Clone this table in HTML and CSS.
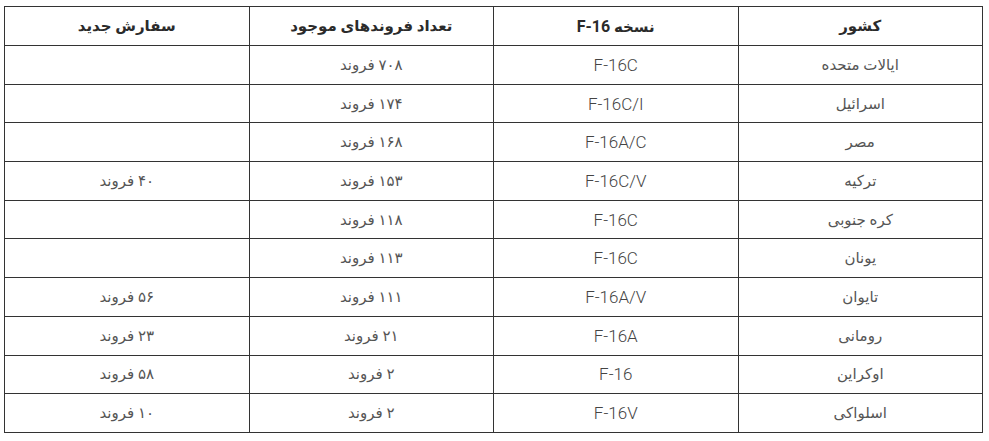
FILE: index.html
```html
<!DOCTYPE html>
<html lang="fa" dir="rtl">
<head>
<meta charset="utf-8">
<link rel="stylesheet" href="styles.css">
</head>
<body>
<table class="fleet">
<thead>
<tr><th>کشور</th><th>نسخه <span class="lat">F-16</span></th><th>تعداد فروندهای موجود</th><th>سفارش جدید</th></tr>
</thead>
<tbody>
<tr><td>ایالات متحده</td><td class="lat">F-16C</td><td>۷۰۸ فروند</td><td></td></tr>
<tr><td>اسرائیل</td><td class="lat">F-16C/I</td><td>۱۷۴ فروند</td><td></td></tr>
<tr><td>مصر</td><td class="lat">F-16A/C</td><td>۱۶۸ فروند</td><td></td></tr>
<tr><td>ترکیه</td><td class="lat">F-16C/V</td><td>۱۵۳ فروند</td><td>۴۰ فروند</td></tr>
<tr><td>کره جنوبی</td><td class="lat">F-16C</td><td>۱۱۸ فروند</td><td></td></tr>
<tr><td>یونان</td><td class="lat">F-16C</td><td>۱۱۳ فروند</td><td></td></tr>
<tr><td>تایوان</td><td class="lat">F-16A/V</td><td>۱۱۱ فروند</td><td>۵۶ فروند</td></tr>
<tr><td>رومانی</td><td class="lat">F-16A</td><td>۲۱ فروند</td><td>۲۳ فروند</td></tr>
<tr><td>اوکراین</td><td class="lat">F-16</td><td>۲ فروند</td><td>۵۸ فروند</td></tr>
<tr><td>اسلواکی</td><td class="lat">F-16V</td><td>۲ فروند</td><td>۱۰ فروند</td></tr>
</tbody>
</table>
</body>
</html>
```
FILE: styles.css
```css
html, body {
  margin: 0;
  padding: 0;
  background: #fff;
}
body {
  padding: 6px 6px 0 5px;
  font-family: Roboto, "DejaVu Sans", sans-serif;
}
.fleet {
  width: 979px;
  border-collapse: collapse;
  table-layout: fixed;
  direction: rtl;
}
.fleet th,
.fleet td {
  border: 1px solid #333;
  text-align: center;
  vertical-align: middle;
  padding: 0 8px;
}
.fleet th {
  height: 38px;
  font-size: 15px;
  font-weight: bold;
  color: #2b2b2b;
}
.fleet td {
  height: 37.7px;
  font-size: 15px;
  color: #555;
}
.fleet td.lat {
  font-family: Roboto, sans-serif;
  font-size: 17px;
  font-weight: 300;
  color: #444;
}
.fleet th .lat {
  font-family: Roboto, sans-serif;
  font-size: 16px;
}
```
